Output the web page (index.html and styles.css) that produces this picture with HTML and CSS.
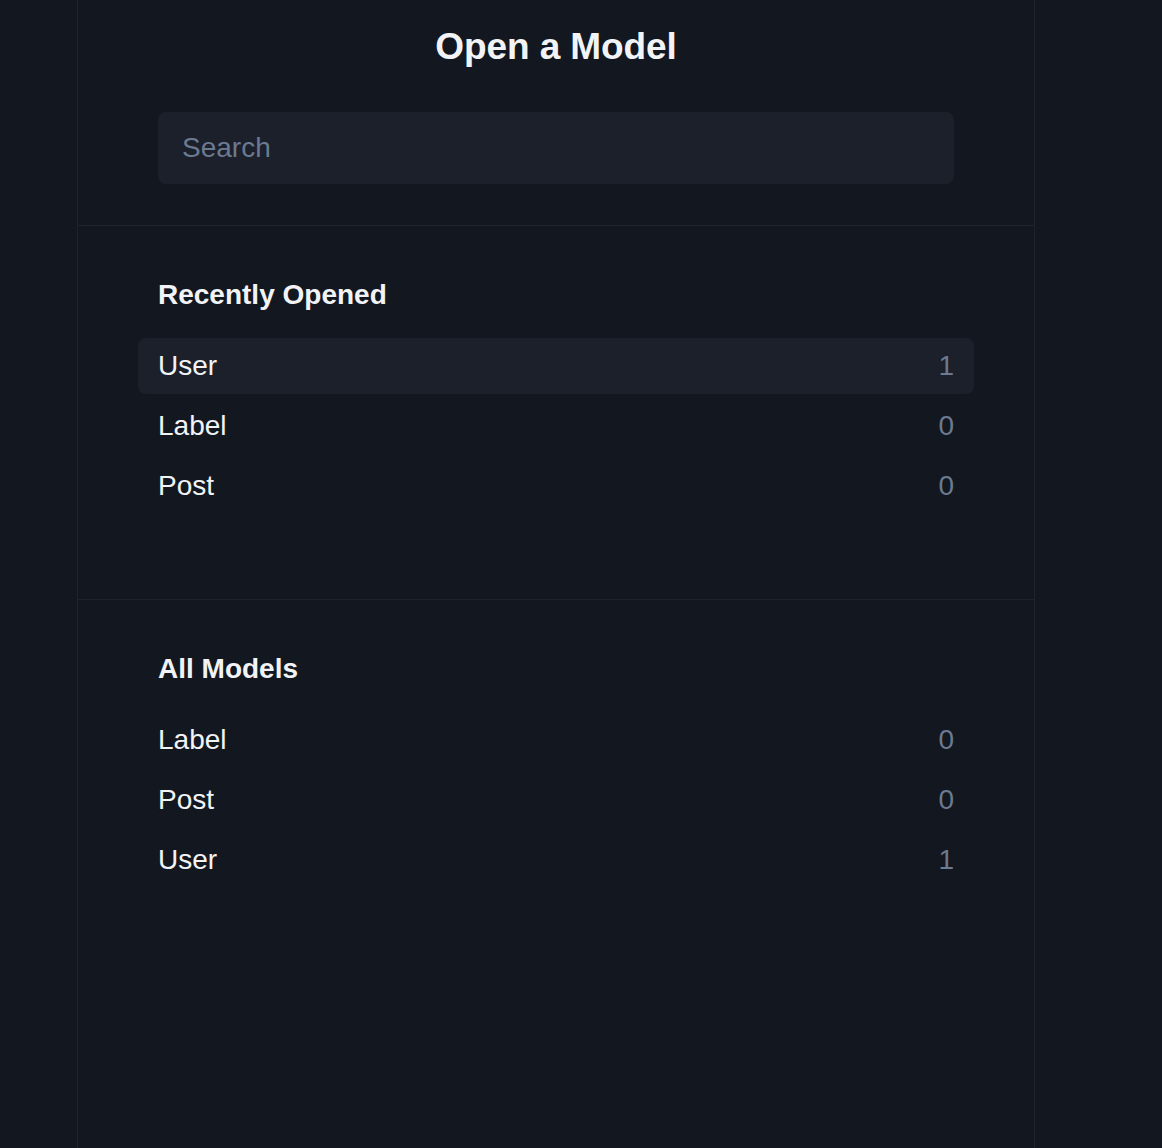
FILE: index.html
```html
<!DOCTYPE html>
<html lang="en">
<head>
<meta charset="utf-8">
<title>Open a Model</title>
<link rel="stylesheet" href="styles.css">
</head>
<body>
<div class="panel">
  <header class="head">
    <h1 class="title">Open a Model</h1>
    <input class="search" type="text" placeholder="Search">
  </header>
  <section class="section">
    <h2 class="section-title">Recently Opened</h2>
    <ul class="list">
      <li class="row active"><span>User</span><span class="count">1</span></li>
      <li class="row"><span>Label</span><span class="count">0</span></li>
      <li class="row"><span>Post</span><span class="count">0</span></li>
    </ul>
  </section>
  <section class="section last">
    <h2 class="section-title">All Models</h2>
    <ul class="list">
      <li class="row"><span>Label</span><span class="count">0</span></li>
      <li class="row"><span>Post</span><span class="count">0</span></li>
      <li class="row"><span>User</span><span class="count">1</span></li>
    </ul>
  </section>
</div>
</body>
</html>
```
FILE: styles.css
```css
html, body {
  margin: 0;
  padding: 0;
  height: 100%;
  background: #131720;
  font-family: "Liberation Sans", Arial, sans-serif;
  color: #f1f3f6;
}
body {
  overflow: hidden;
}
.panel {
  margin-left: 77px;
  width: 956px;
  min-height: 1148px;
  border-left: 1px solid #1e232d;
  border-right: 1px solid #1e232d;
  box-sizing: content-box;
}
.head {
  padding: 23px 80px 41px;
  border-bottom: 1px solid #1e232d;
  display: flex;
  flex-direction: column;
  align-items: stretch;
}
.title {
  margin: 0;
  font-size: 37px;
  line-height: 48px;
  font-weight: 700;
  text-align: center;
  letter-spacing: -0.1px;
}
.search {
  margin-top: 41px;
  height: 72px;
  box-sizing: border-box;
  border: none;
  outline: none;
  border-radius: 8px;
  background: #1b202b;
  padding: 0 24px;
  font-family: "Liberation Sans", Arial, sans-serif;
  font-size: 28px;
  color: #f1f3f6;
}
.search::placeholder {
  color: #6b7a90;
}
.section {
  padding: 49px 80px 85px;
  border-bottom: 1px solid #1e232d;
}
.section.last {
  border-bottom: none;
}
.section-title {
  margin: 0 0 23px;
  font-size: 28px;
  line-height: 40px;
  font-weight: 700;
}
.list {
  list-style: none;
  margin: 0 -20px;
  padding: 0;
  display: flex;
  flex-direction: column;
  gap: 4px;
}
.row {
  height: 56px;
  padding: 0 20px;
  display: flex;
  align-items: center;
  justify-content: space-between;
  border-radius: 8px;
  font-size: 28px;
}
.row.active {
  background: #1b202b;
}
.count {
  color: #6b7a90;
}
```
